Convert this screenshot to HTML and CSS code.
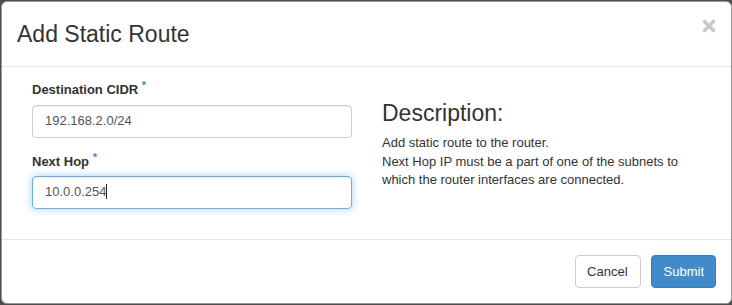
FILE: index.html
```html
<!DOCTYPE html>
<html>
<head lang="en">
    <meta charset="UTF-8">
    <title>Add Static Route</title>
    <link rel="stylesheet" href="styles.css">
</head>
<body>
<div class="modal">
    <div class="modalHeader">
        <h3 class="modalTitle">Add Static Route</h3>
        <span class="close">
            <svg width="14" height="14" viewBox="0 0 14 14">
                <path d="M2.5 2.5 L11.5 11.5 M11.5 2.5 L2.5 11.5" stroke="#c9c9c9" stroke-width="3.6" stroke-linecap="round"/>
            </svg>
        </span>
    </div>
    <div class="modalBody">
        <div class="leftCol">
            <div class="formGroup">
                <label>Destination CIDR <span class="req">*</span></label>
                <div class="input">192.168.2.0/24</div>
            </div>
            <div class="formGroup">
                <label>Next Hop <span class="req">*</span></label>
                <div class="input focus">10.0.0.254<span class="caret"></span></div>
            </div>
        </div>
        <div class="rightCol">
            <h3>Description:</h3>
            <p>Add static route to the router.<br>
                Next Hop IP must be a part of one of the subnets to which the router interfaces are connected.</p>
        </div>
    </div>
    <div class="modalFooter">
        <button class="btn">Cancel</button>
        <button class="btn primary">Submit</button>
    </div>
</div>
</body>
</html>
```

FILE: styles.css
```css
*{
    padding: 0;
    margin: 0;
    box-sizing: border-box;
}
body{
    background-color: #4e4e4e;
    font: 13px/1.42857 "Liberation Sans", Arial, sans-serif;
    color: #333;
    padding: 1px 0 0 1px;
}
.modal{
    width: 731px;
    background-color: #fff;
    border: 1px solid #999;
    border-radius: 6px;
}
.modalHeader{
    display: flex;
    justify-content: space-between;
    align-items: flex-start;
    padding: 15px;
    border-bottom: 1px solid #e5e5e5;
}
.modalTitle{
    font-size: 23px;
    font-weight: normal;
    line-height: 34px;
    color: #333;
}
.close{
    display: block;
    margin-top: 2px;
    height: 14px;
}
.modalBody{
    display: flex;
    gap: 30px;
    padding: 14px 15px 15px 30px;
}
.leftCol{
    width: 320px;
}
.formGroup{
    margin-bottom: 15px;
}
label{
    display: block;
    font-weight: bold;
    margin-bottom: 5px;
}
.req{
    color: #428bca;
    font-size: 11px;
    position: relative;
    top: -5px;
}
.input{
    height: 33px;
    padding: 6px 12px;
    border: 1px solid #ccc;
    border-radius: 4px;
    color: #555;
    box-shadow: inset 0 1px 1px rgba(0,0,0,.075);
}
.input.focus{
    border-color: #66afe9;
    box-shadow: inset 0 1px 1px rgba(0,0,0,.075), 0 0 8px rgba(102,175,233,.6);
}
.caret{
    display: inline-block;
    width: 1px;
    height: 15px;
    background-color: #222;
    vertical-align: -3px;
}
.rightCol{
    width: 320px;
}
.rightCol h3{
    font-size: 23px;
    font-weight: normal;
    line-height: 34px;
    margin: 15px 0 4px;
}
.modalFooter{
    display: flex;
    justify-content: flex-end;
    gap: 10px;
    padding: 15px;
    border-top: 1px solid #e5e5e5;
}
.btn{
    height: 33px;
    padding: 0 12px 0 11px;
    font: 13px "Liberation Sans", Arial, sans-serif;
    color: #333;
    background-color: #fff;
    border: 1px solid #ccc;
    border-radius: 4px;
}
.btn.primary{
    padding: 0 11px 0 12px;
    color: #fff;
    background-color: #428bca;
    border-color: #357ebd;
}
```
